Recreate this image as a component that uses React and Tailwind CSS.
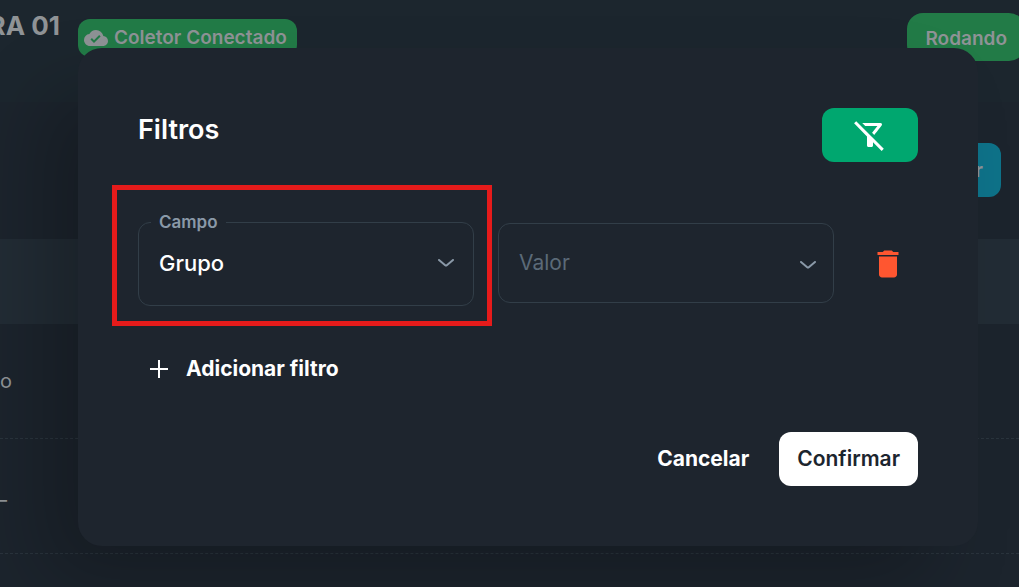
import React, { useState } from "react"
import { MdCloudDone, MdDelete, MdOutlineFilterAltOff } from "react-icons/md"

const ChevronIcon = ({ className }) => (
  <svg viewBox="0 0 16 8" fill="none" className={className} aria-hidden="true">
    <path
      d="M1 1L7.2 6.2C7.7 6.6 8.3 6.6 8.8 6.2L15 1"
      stroke="currentColor"
      strokeWidth="2"
      strokeLinecap="round"
    />
  </svg>
)

const PlusIcon = ({ className }) => (
  <svg viewBox="0 0 18 18" fill="none" className={className} aria-hidden="true">
    <path d="M9 0V18M0 9H18" stroke="currentColor" strokeWidth="2" />
  </svg>
)

const Background = () => (
  <div className="absolute inset-0 overflow-hidden bg-[#1c242d]">
    <header className="flex h-[102px] items-start justify-between bg-[#1c262e]">
      <div className="flex items-start">
        <h1 className="flex w-[78px] shrink-0 justify-end pt-2 pr-[18px] text-[26px] leading-9 font-bold whitespace-nowrap text-[#8f9396]">
          MOLDURA 01
        </h1>
        <span className="mt-[19px] flex h-[38px] items-center gap-1.5 rounded-xl bg-[#227b47] pr-2.5 pl-1.5 text-[19px] font-semibold text-[#8f9396]">
          <MdCloudDone className="size-6" />
          Coletor Conectado
        </span>
      </div>
      <span className="mt-[13px] -mr-1.5 flex h-12 items-center rounded-2xl bg-[#227b47] px-[18px] pt-1 text-[19px] font-semibold text-[#8f9396]">
        Rodando
      </span>
    </header>
    <div className="flex h-[137px] items-start justify-end pt-[41px] pr-[18px]">
      <button type="button" className="h-[54px] rounded-xl bg-[#0e7289] px-[18px] text-xl font-bold text-[#8f9396]">
        Filtrar
      </button>
    </div>
    <div className="h-[85px] bg-[#222c35]" />
    <div className="flex h-[115px] items-center border-b border-dashed border-[#2a343d] text-xl text-[#8f9396]">
      <span className="flex w-3 justify-end">Grupo</span>
    </div>
    <div className="flex h-[115px] items-center border-b border-dashed border-[#2a343d] pt-2 text-xl text-[#8f9396]">
      <span className="flex w-[7px] justify-end">–</span>
    </div>
  </div>
)

const App = () => {
  const [campo, setCampo] = useState("grupo")
  const [valor, setValor] = useState("")

  return (
    <div className="relative min-h-screen overflow-hidden bg-[#1c242d] font-['Inter',sans-serif]">
      <Background />

      <div className="relative px-[41px] pt-12 pb-10 pl-[78px]">
        <div
          role="dialog"
          aria-labelledby="filtros-title"
          className="rounded-3xl bg-[#1e252e] p-[60px] shadow-[-40px_40px_80px_-8px_rgba(0,0,0,0.24)]"
        >
          <div className="flex items-start justify-between">
            <h2 id="filtros-title" className="pt-1 text-[27px] leading-9 font-semibold text-white">
              Filtros
            </h2>
            <button
              type="button"
              aria-label="Limpar filtros"
              className="flex h-[54px] w-24 items-center justify-center rounded-xl bg-[#00a76f] text-white"
            >
              <MdOutlineFilterAltOff className="size-9" />
            </button>
          </div>

          <div className="mt-[52px] flex items-center">
            <div className="grid flex-1 grid-cols-2 items-center gap-6">
              <div className="relative">
                <fieldset className="h-[92px] rounded-xl border border-[#323e48] px-3">
                  <legend className="px-2 text-[17px] leading-4 font-semibold text-[#8a99a8]">
                    <label htmlFor="campo">Campo</label>
                  </legend>
                  <div className="relative flex items-center">
                    <select
                      id="campo"
                      value={campo}
                      onChange={(e) => setCampo(e.target.value)}
                      className="h-[66px] w-full appearance-none bg-transparent px-2 text-[22px] font-medium text-white outline-none"
                    >
                      <option value="grupo">Grupo</option>
                    </select>
                    <ChevronIcon className="pointer-events-none absolute right-[7px] h-2 w-4 text-[#8a99a8]" />
                  </div>
                </fieldset>
                <div className="pointer-events-none absolute -top-[29px] -right-[18px] -bottom-5 -left-[26px] border-[5px] border-[#e61b1b]" />
              </div>

              <div className="relative mt-1.5 flex items-center">
                <select
                  aria-label="Valor"
                  value={valor}
                  onChange={(e) => setValor(e.target.value)}
                  className="h-20 w-full appearance-none rounded-xl border border-[#323e48] bg-transparent px-5 text-[21px] text-[#5b6a78] outline-none"
                >
                  <option value="">Valor</option>
                </select>
                <ChevronIcon className="pointer-events-none absolute right-[18px] mt-1 h-2 w-4 text-[#8a99a8]" />
              </div>
            </div>

            <button type="button" aria-label="Remover filtro" className="mt-2 mr-3 ml-9 text-[#ff5630]">
              <MdDelete className="size-9" />
            </button>
          </div>

          <button type="button" className="mt-[45px] flex h-9 items-center gap-[18px] pl-3 text-[21px] font-bold text-white">
            <PlusIcon className="size-[18px]" />
            Adicionar filtro
          </button>

          <div className="mt-[45px] flex items-center justify-end gap-3">
            <button type="button" className="h-[54px] px-[18px] text-[21px] font-bold text-white">
              Cancelar
            </button>
            <button type="button" className="h-[54px] rounded-xl bg-white px-[18px] text-[21px] font-semibold text-[#1c252e]">
              Confirmar
            </button>
          </div>
        </div>
      </div>
    </div>
  )
}

export default App
